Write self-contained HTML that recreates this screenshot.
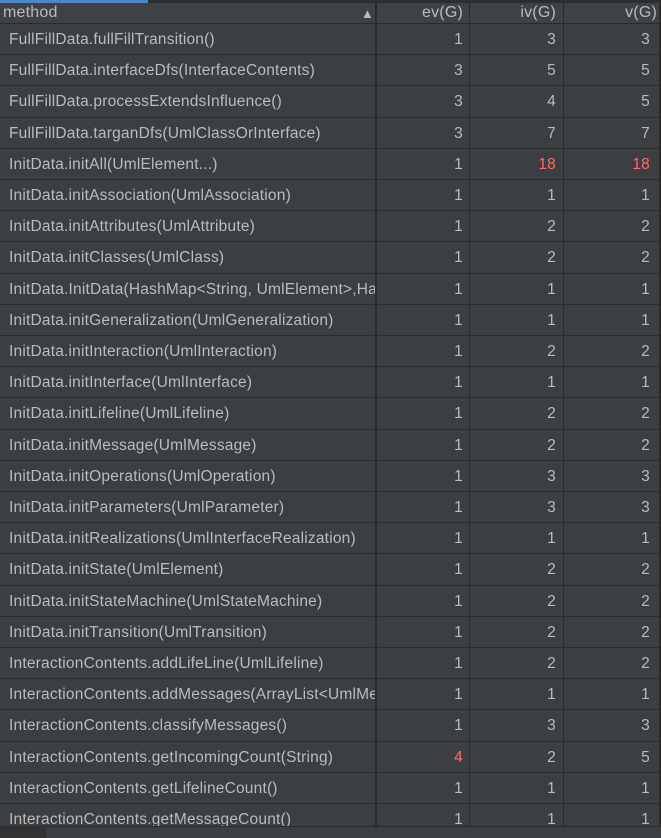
<!DOCTYPE html>
<html><head><meta charset="utf-8"><style>
*{margin:0;padding:0;box-sizing:border-box}
body{width:661px;height:837px;background:#3b3f42;overflow:hidden;position:relative;font-family:"Liberation Sans","Noto Sans CJK SC",sans-serif;font-size:15.5px;letter-spacing:0.2px;color:#bbbbbb}
.top{position:absolute;left:0;top:0;width:661px;height:3px;background:#2b2d2f}
.top i{position:absolute;left:0;top:0;width:148px;height:3px;background:#4a88c7}
.hdr{position:absolute;left:0;top:3px;width:661px;height:21px;background:#3f4244;border-bottom:1px solid #2b2b2b}
.hdr span{position:absolute;top:1px;color:#bbbbbb;font-size:16px}
.row{position:absolute;left:0;width:661px;height:31.2px;border-bottom:1px solid #2b2b2b}
.row span{position:absolute;top:7px;white-space:nowrap}
.m{left:9px;width:366px;overflow:hidden}
.a{right:198px}.b{right:105px}.c{right:11px}
.r{color:#ff6b68}
.vl{position:absolute;top:3px;bottom:0;width:1px;background:#2b2b2b}
.status{position:absolute;left:0;top:826px;width:661px;height:11px;background:#3c3f41;border-top:1px solid #2b2b2b}
.status i{position:absolute;left:0;top:0;width:46px;height:11px;background:#313335}
</style></head><body>
<div class="top"><i></i></div>
<div class="hdr"><span style="left:3px">method</span><span style="left:361px;top:3px;font-size:13px">▲</span><span style="right:198px">ev(G)</span><span style="right:105px">iv(G)</span><span style="right:4px">v(G)</span></div>
<div class="row" style="top:24px"><span class="m">FullFillData.fullFillTransition()</span><span class="a">1</span><span class="b">3</span><span class="c">3</span></div>
<div class="row" style="top:55.2px"><span class="m">FullFillData.interfaceDfs(InterfaceContents)</span><span class="a">3</span><span class="b">5</span><span class="c">5</span></div>
<div class="row" style="top:86.4px"><span class="m">FullFillData.processExtendsInfluence()</span><span class="a">3</span><span class="b">4</span><span class="c">5</span></div>
<div class="row" style="top:117.6px"><span class="m">FullFillData.targanDfs(UmlClassOrInterface)</span><span class="a">3</span><span class="b">7</span><span class="c">7</span></div>
<div class="row" style="top:148.8px"><span class="m">InitData.initAll(UmlElement...)</span><span class="a">1</span><span class="b r">18</span><span class="c r">18</span></div>
<div class="row" style="top:180px"><span class="m">InitData.initAssociation(UmlAssociation)</span><span class="a">1</span><span class="b">1</span><span class="c">1</span></div>
<div class="row" style="top:211.2px"><span class="m">InitData.initAttributes(UmlAttribute)</span><span class="a">1</span><span class="b">2</span><span class="c">2</span></div>
<div class="row" style="top:242.4px"><span class="m">InitData.initClasses(UmlClass)</span><span class="a">1</span><span class="b">2</span><span class="c">2</span></div>
<div class="row" style="top:273.6px"><span class="m">InitData.InitData(HashMap&lt;String, UmlElement&gt;,HashMap</span><span class="a">1</span><span class="b">1</span><span class="c">1</span></div>
<div class="row" style="top:304.8px"><span class="m">InitData.initGeneralization(UmlGeneralization)</span><span class="a">1</span><span class="b">1</span><span class="c">1</span></div>
<div class="row" style="top:336px"><span class="m">InitData.initInteraction(UmlInteraction)</span><span class="a">1</span><span class="b">2</span><span class="c">2</span></div>
<div class="row" style="top:367.2px"><span class="m">InitData.initInterface(UmlInterface)</span><span class="a">1</span><span class="b">1</span><span class="c">1</span></div>
<div class="row" style="top:398.4px"><span class="m">InitData.initLifeline(UmlLifeline)</span><span class="a">1</span><span class="b">2</span><span class="c">2</span></div>
<div class="row" style="top:429.6px"><span class="m">InitData.initMessage(UmlMessage)</span><span class="a">1</span><span class="b">2</span><span class="c">2</span></div>
<div class="row" style="top:460.8px"><span class="m">InitData.initOperations(UmlOperation)</span><span class="a">1</span><span class="b">3</span><span class="c">3</span></div>
<div class="row" style="top:492px"><span class="m">InitData.initParameters(UmlParameter)</span><span class="a">1</span><span class="b">3</span><span class="c">3</span></div>
<div class="row" style="top:523.2px"><span class="m">InitData.initRealizations(UmlInterfaceRealization)</span><span class="a">1</span><span class="b">1</span><span class="c">1</span></div>
<div class="row" style="top:554.4px"><span class="m">InitData.initState(UmlElement)</span><span class="a">1</span><span class="b">2</span><span class="c">2</span></div>
<div class="row" style="top:585.6px"><span class="m">InitData.initStateMachine(UmlStateMachine)</span><span class="a">1</span><span class="b">2</span><span class="c">2</span></div>
<div class="row" style="top:616.8px"><span class="m">InitData.initTransition(UmlTransition)</span><span class="a">1</span><span class="b">2</span><span class="c">2</span></div>
<div class="row" style="top:648px"><span class="m">InteractionContents.addLifeLine(UmlLifeline)</span><span class="a">1</span><span class="b">2</span><span class="c">2</span></div>
<div class="row" style="top:679.2px"><span class="m">InteractionContents.addMessages(ArrayList&lt;UmlMessage&gt;)</span><span class="a">1</span><span class="b">1</span><span class="c">1</span></div>
<div class="row" style="top:710.4px"><span class="m">InteractionContents.classifyMessages()</span><span class="a">1</span><span class="b">3</span><span class="c">3</span></div>
<div class="row" style="top:741.6px"><span class="m">InteractionContents.getIncomingCount(String)</span><span class="a r">4</span><span class="b">2</span><span class="c">5</span></div>
<div class="row" style="top:772.8px"><span class="m">InteractionContents.getLifelineCount()</span><span class="a">1</span><span class="b">1</span><span class="c">1</span></div>
<div class="row" style="top:804px"><span class="m">InteractionContents.getMessageCount()</span><span class="a">1</span><span class="b">1</span><span class="c">1</span></div>
<div class="vl" style="left:375px;width:2px"></div>
<div class="vl" style="left:469px"></div>
<div class="vl" style="left:563px"></div>
<div class="vl" style="left:659px;width:2px"></div>
<div class="status"><i></i></div>
</body></html>
